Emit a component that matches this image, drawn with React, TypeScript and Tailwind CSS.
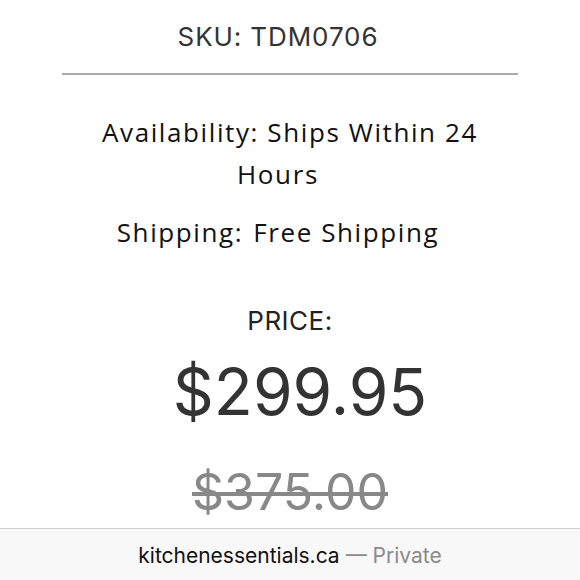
import React from "react";

const sans = "font-['Inter','Liberation_Sans',sans-serif]";
const body = "font-['Open_Sans','Inter',sans-serif]";

export default function App() {
  return (
    <div className={`w-[580px] h-[580px] bg-white flex flex-col overflow-hidden ${sans}`}>
      <div className="flex-1 flex flex-col items-center">
        <div className="pt-[19px] h-[58px] mr-[24px] text-[26px] leading-[36px] tracking-[0.9px] text-[#333]">
          SKU: TDM0706
        </div>
        <div className="mt-[15px] w-[456px] h-[2px] bg-[#aaaaaa]" />

        <div className={`mt-[36px] flex flex-col items-center text-[26px] leading-[42px] tracking-[1.6px] text-[#111] ${body}`}>
          <span>Availability: Ships Within 24</span>
          <span className="mr-[24px]">Hours</span>
        </div>
        <div className={`mt-[16px] mr-[24px] text-[26px] leading-[42px] tracking-[1.6px] text-[#111] flex gap-[10px] ${body}`}>
          <span>Shipping:</span>
          <span>Free Shipping</span>
        </div>

        <div className="mt-[50px] text-[26px] leading-[36px] text-[#222] tracking-[0.5px]">
          PRICE:
        </div>
        <div className="mt-[15px] ml-[20px] text-[64px] leading-[76px] text-[#333]">
          $299.95
        </div>
        <div className="mt-[32px] text-[50px] leading-[60px] text-[#888] line-through decoration-[4px]">
          $375.00
        </div>
      </div>

      <div className="h-[52px] shrink-0 border-t border-[#cfcfcf] bg-[#f8f8f8] flex items-center justify-center pt-[2px]">
        <span className="text-[21px] text-[#111]">kitchenessentials.ca</span>
        <span className="text-[21px] text-[#8a8a8a] ml-[6px]">— Private</span>
      </div>
    </div>
  );
}
